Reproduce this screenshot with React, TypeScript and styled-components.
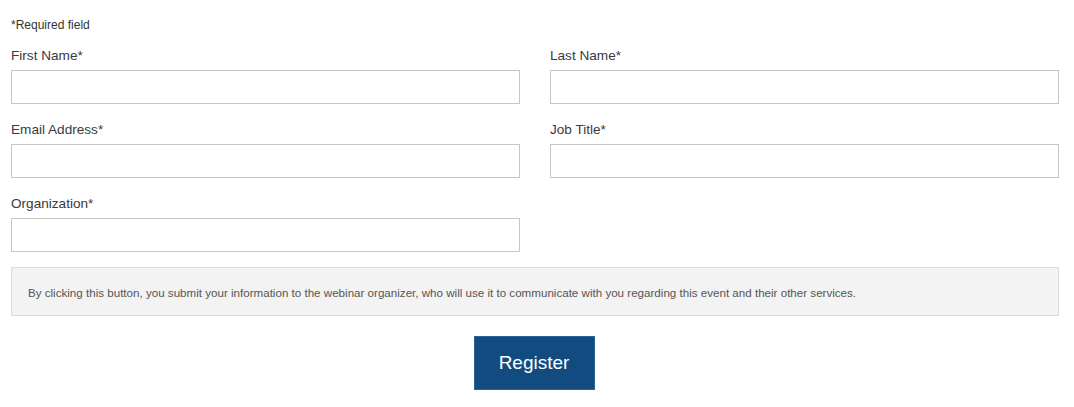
import styled, { createGlobalStyle } from 'styled-components';

const GlobalStyle = createGlobalStyle`
  body {
    margin: 0;
    background: #fff;
    font-family: "Liberation Sans", Arial, sans-serif;
  }
`;

const Form = styled.form`
  width: 1048px;
  margin: 0 11px;
  padding-top: 18px;
`;

const Required = styled.div`
  font-size: 12px;
  line-height: 14px;
  color: #333;
`;

const Grid = styled.div`
  display: grid;
  grid-template-columns: 509px 509px;
  column-gap: 30px;
  row-gap: 16px;
  margin-top: 14px;
`;

const Field = styled.div`
  display: flex;
  flex-direction: column;
`;

const Label = styled.label`
  font-size: 13.6px;
  line-height: 18px;
  padding-top: 1px;
  color: #3a3a3a;
  margin-bottom: 5px;
`;

const Input = styled.input`
  box-sizing: border-box;
  width: 100%;
  height: 34px;
  border: 1px solid #c6c6c6;
  background: #fff;
  padding: 0 8px;
  font: inherit;
  outline: none;
`;

const Notice = styled.div`
  box-sizing: border-box;
  margin-top: 15px;
  height: 49px;
  display: flex;
  align-items: center;
  padding: 2px 16px 0;
  background: #f3f3f3;
  border: 1px solid #dcdcdc;
  font-size: 11.6px;
  color: #555;
`;

const Actions = styled.div`
  display: flex;
  justify-content: center;
  margin-top: 20px;
`;

const Button = styled.button`
  width: 121px;
  height: 54px;
  margin-left: -2px;
  border: 1px solid #2a6496;
  background: #114b7f;
  color: #fff;
  font-family: inherit;
  font-size: 19px;
  cursor: pointer;
`;

const fields = [
  { id: 'first', label: 'First Name*' },
  { id: 'last', label: 'Last Name*' },
  { id: 'email', label: 'Email Address*' },
  { id: 'job', label: 'Job Title*' },
  { id: 'org', label: 'Organization*' },
];

export default function App() {
  return (
    <>
      <GlobalStyle />
      <Form onSubmit={(e) => e.preventDefault()}>
        <Required>*Required field</Required>
        <Grid>
          {fields.map((f) => (
            <Field key={f.id}>
              <Label htmlFor={f.id}>{f.label}</Label>
              <Input id={f.id} type="text" />
            </Field>
          ))}
        </Grid>
        <Notice>
          By clicking this button, you submit your information to the webinar organizer, who will use it to
          communicate with you regarding this event and their other services.
        </Notice>
        <Actions>
          <Button type="submit">Register</Button>
        </Actions>
      </Form>
    </>
  );
}
